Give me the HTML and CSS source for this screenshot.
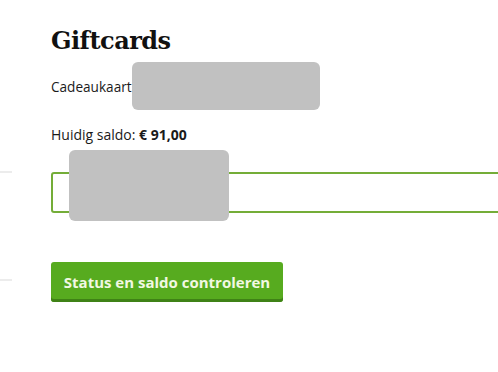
FILE: index.html
```html
<!DOCTYPE html>
<html lang="nl">
<head>
<meta charset="UTF-8">
<meta name="viewport" content="width=device-width, initial-scale=1.0">
<title>Giftcards</title>
<link rel="stylesheet" href="styles.css">
</head>
<body>
<div class="edge edge-top"></div>
<div class="edge edge-bottom"></div>
<div id="giftcards">
    <h1>Giftcards</h1>
    <p class="card-line">Cadeaukaart<span class="redacted redacted-card"></span></p>
    <p class="balance">Huidig saldo: <strong>€ 91,00</strong></p>
    <div class="field">
        <input type="text" class="code-input">
        <span class="redacted redacted-input"></span>
    </div>
    <button class="check">Status en saldo controleren</button>
</div>
</body>
</html>
```

FILE: styles.css
```css
body {
    margin: 0;
    background-color: #fff;
    font-family: "Open Sans", Arial, sans-serif;
    color: #1a1a1a;
    overflow: hidden;
}
#giftcards {
    padding: 25px 0 0 51px;
}
h1 {
    font-family: "DejaVu Serif", Georgia, serif;
    font-size: 24px;
    font-weight: bold;
    line-height: 32px;
    margin: 0 0 5px 0;
    color: #111;
    letter-spacing: -0.5px;
}
.card-line {
    display: flex;
    align-items: center;
    margin: 0;
    font-size: 13.6px;
    height: 48px;
}
.redacted {
    background-color: #c1c1c1;
    border-radius: 6px;
}
.redacted-card {
    display: inline-block;
    width: 188px;
    height: 48px;
}
.balance {
    margin: 15px 0 0 0;
    font-size: 14px;
    line-height: 20px;
}
.balance strong {
    font-weight: bold;
}
.field {
    position: relative;
    margin-top: 27px;
}
.code-input {
    display: block;
    width: 470px;
    height: 41px;
    box-sizing: border-box;
    border: 2px solid #74ad38;
    border-radius: 3px;
    background-color: #fff;
}
.redacted-input {
    position: absolute;
    left: 18px;
    top: -22px;
    width: 160px;
    height: 71px;
}
.check {
    margin-top: 49px;
    padding: 0 12px;
    height: 40px;
    width: 232px;
    border: none;
    border-radius: 3px;
    background-color: #57ab1f;
    box-shadow: inset 0 -3px 0 #3f8216;
    color: #f1f8e2;
    font-family: "Open Sans", Arial, sans-serif;
    font-size: 15px;
    font-weight: bold;
    cursor: pointer;
}
.edge {
    position: absolute;
    left: 0;
    width: 12px;
    height: 2px;
    background-color: #ececec;
}
.edge-top {
    top: 171px;
}
.edge-bottom {
    top: 279px;
}
```
